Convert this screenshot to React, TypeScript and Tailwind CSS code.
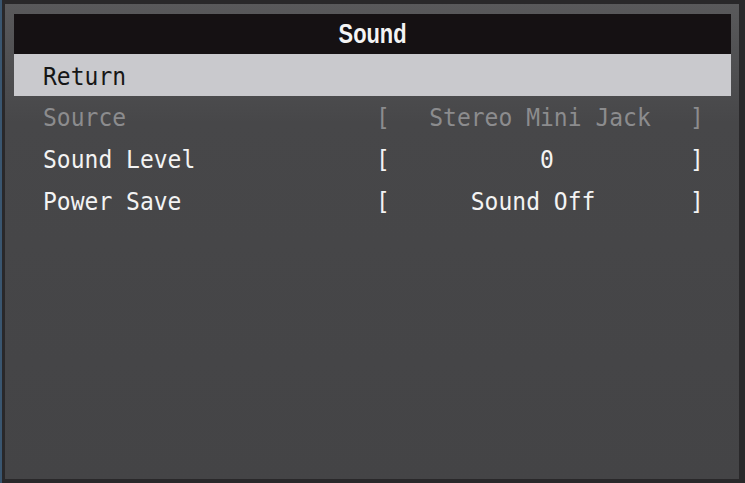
const rows = [
  { label: "Source", value: "Stereo Mini Jack", disabled: true },
  { label: "Sound Level", value: " 0", disabled: false },
  { label: "Power Save", value: "Sound Off ", disabled: false },
];

const mono = { fontFamily: '"DejaVu Sans Mono", "Liberation Mono", monospace' };

const App = () => {
  return (
    <div className="w-[745px] h-[483px] flex bg-[#29282a] border-l-2 border-[#3a5670] pt-[4px] pl-[3px] pr-[6px] pb-[4px]">
      <div className="flex-1 flex flex-col pt-[10px] pl-[9px] pr-[8px] bg-linear-to-b from-[#59595b] via-[#474749] via-[25%] to-[#444446]">
        <div className="h-[40px] bg-[#151113] flex items-center justify-center">
          <span
            className="text-[28px] font-bold text-[#f4f4f4] leading-none inline-block scale-x-[0.78] -mt-[1px]"
            style={{ fontFamily: '"Liberation Sans", Arial, sans-serif' }}
          >
            Sound
          </span>
        </div>

        <div className="h-[42px] bg-[#c9c9cd] flex items-center pl-[29px] text-[23px] text-[#161616]" style={mono}>
          <span className="inline-block scale-y-[1.08] pt-[2px]">Return</span>
        </div>

        {rows.map((row) => (
          <div
            key={row.label}
            className={`h-[42px] flex items-center pl-[29px] text-[23px] whitespace-pre ${row.disabled ? "text-[#8c8c8e]" : "text-[#f3f3f3]"}`}
            style={mono}
          >
            <span className="w-[333px] inline-block scale-y-[1.08]">{row.label}</span>
            <span className="w-[14px] inline-block scale-y-[1.08]">[</span>
            <span className="w-[300px] text-center inline-block scale-y-[1.08]">{row.value}</span>
            <span className="w-[14px] inline-block scale-y-[1.08]">]</span>
          </div>
        ))}
      </div>
    </div>
  );
};

export default App;
